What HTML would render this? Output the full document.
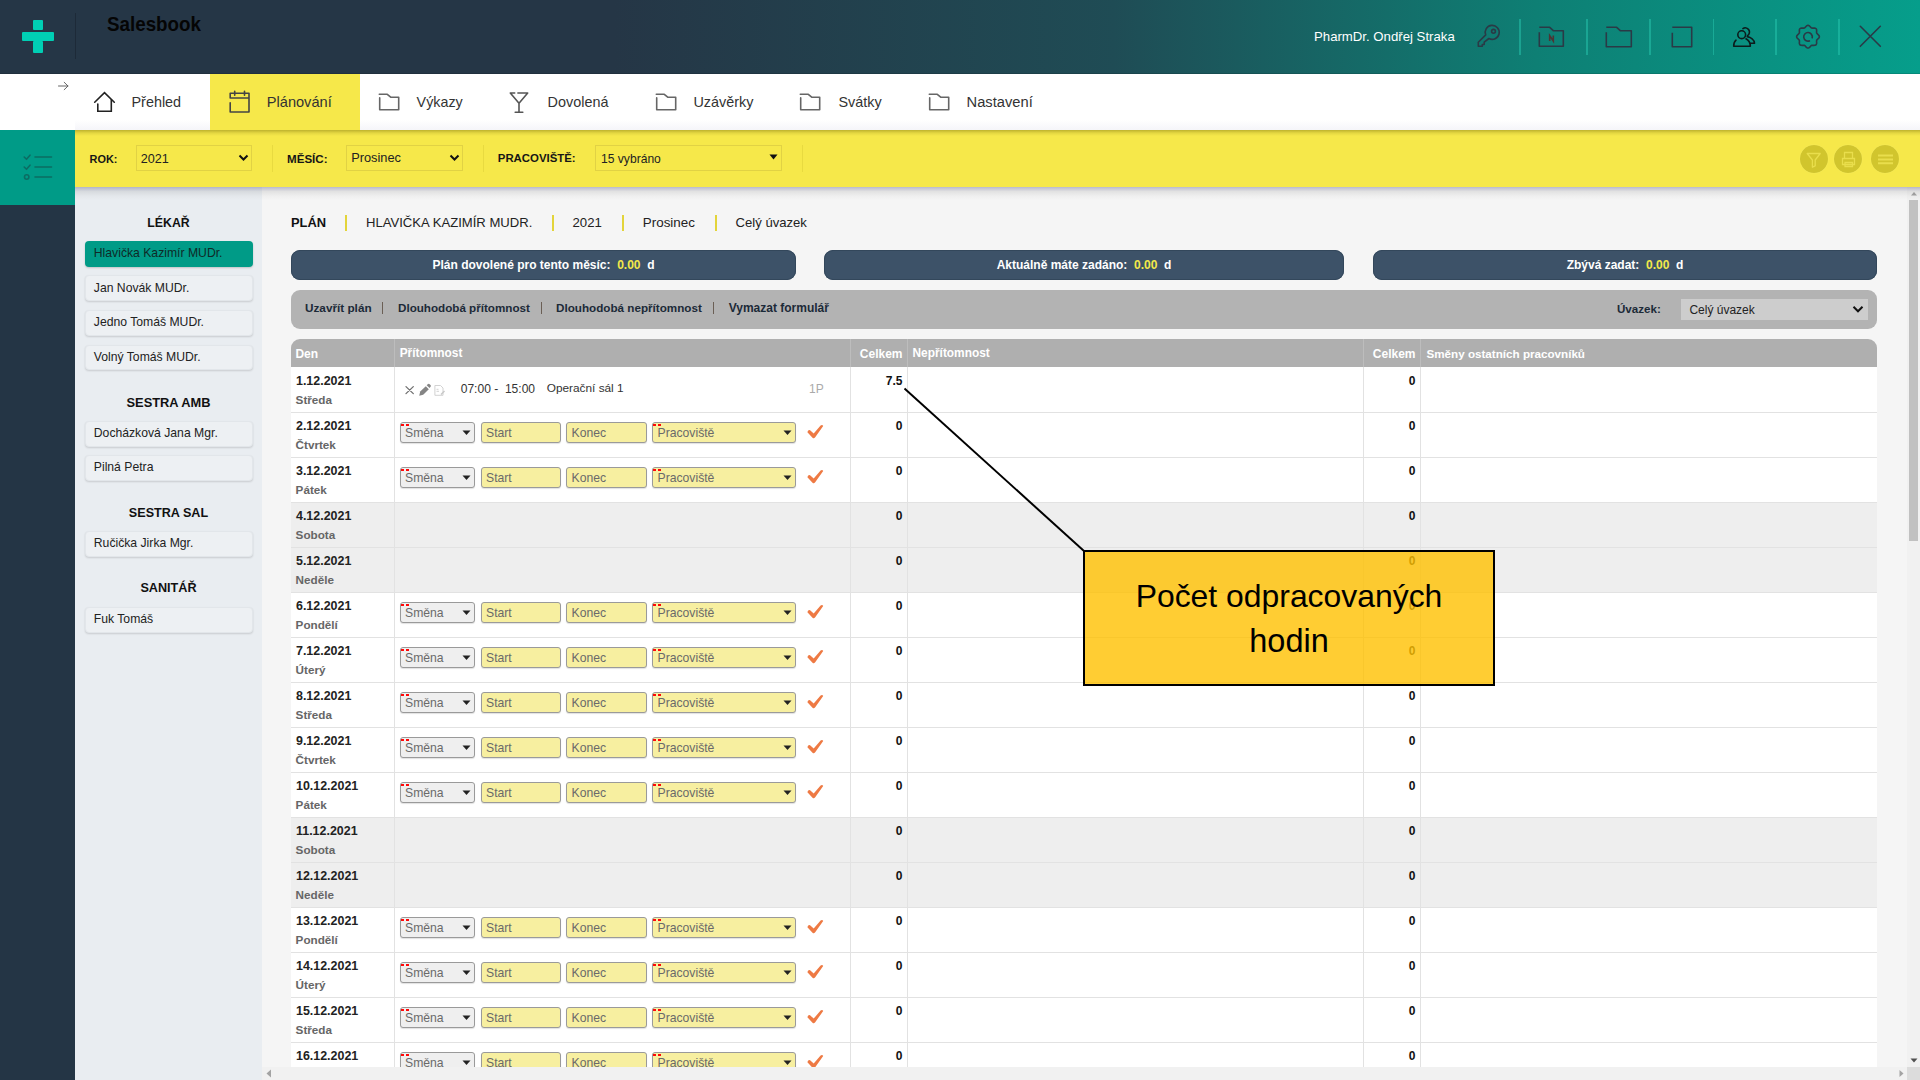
<!DOCTYPE html>
<html><head><meta charset="utf-8"><title>Salesbook</title>
<style>
html,body{margin:0;padding:0;}
body{width:1920px;height:1080px;overflow:hidden;position:relative;background:#f5f5f5;font-family:"Liberation Sans",sans-serif;}
.a{position:absolute;display:block;}
.t{position:absolute;white-space:nowrap;}
</style></head><body>
<div class="a" style="left:0px;top:0px;width:1920px;height:74px;background:linear-gradient(to right,#253646 0%,#253646 32%,#1f4c55 58%,#0e7f74 80%,#069e8b 100%);"></div>
<div class="a" style="left:0px;top:73px;width:1920px;height:1px;background:rgba(0,0,0,0.12);"></div>
<div class="a" style="left:33px;top:20px;width:10px;height:10px;background:#00cfb4;border-radius:1px;"></div>
<div class="a" style="left:22px;top:32px;width:32px;height:9px;background:#00cfb4;border-radius:1px;"></div>
<div class="a" style="left:33px;top:41px;width:10px;height:12px;background:#00cfb4;border-radius:1px;"></div>
<div class="a" style="left:75px;top:13px;width:1px;height:46px;background:#1d2a38;"></div>
<div class="t" style="left:107px;top:13.22px;font-size:21px;line-height:21px;color:#050505;font-weight:bold;transform:scaleX(0.895);transform-origin:0 0;">Salesbook</div>
<div class="t" style="left:1314px;top:29.83px;font-size:13.2px;line-height:13.2px;color:#ffffff;">PharmDr. Ondřej Straka</div>
<div class="a" style="left:1519px;top:19px;width:1.5px;height:36px;background:rgba(40,200,175,0.5);"></div>
<div class="a" style="left:1586.3px;top:19px;width:1.5px;height:36px;background:rgba(40,200,175,0.5);"></div>
<div class="a" style="left:1649.3px;top:19px;width:1.5px;height:36px;background:rgba(40,200,175,0.5);"></div>
<div class="a" style="left:1712.5px;top:19px;width:1.5px;height:36px;background:rgba(40,200,175,0.5);"></div>
<div class="a" style="left:1775.3px;top:19px;width:1.5px;height:36px;background:rgba(40,200,175,0.5);"></div>
<div class="a" style="left:1838px;top:19px;width:1.5px;height:36px;background:rgba(40,200,175,0.5);"></div>
<svg class="a" style="left:1470px;top:18px;" width="40" height="36" viewBox="0 0 40 36"><g fill="none" stroke="#2a3a46" stroke-width="1.6" stroke-linejoin="round"><path d="M15.7 16.9L8.3 24.3V28.3H12.3V26.5H14.2V24.2L18.9 20.5A7 7 0 1 0 15.7 16.9Z"/><circle cx="23.5" cy="13.3" r="1.9"/></g></svg>
<svg class="a" style="left:1530px;top:18px;" width="40" height="36" viewBox="0 0 40 36"><g fill="none" stroke="#2a3a46" stroke-width="1.6" stroke-linejoin="round"><path d="M9.3 9.3H19.7L23.3 12.7H33.3V28.3H9.3V14.3"/></g><path d="M19.7 23V17.6L23.3 23V17.6" fill="none" stroke="#4e3434" stroke-width="1.6"/></svg>
<svg class="a" style="left:1597px;top:18px;" width="40" height="36" viewBox="0 0 40 36"><g fill="none" stroke="#2a3a46" stroke-width="1.6" stroke-linejoin="round"><path d="M9.3 9.3H19.7L23.3 12.7H34.3V28.8H9.3V14.3"/></g></svg>
<svg class="a" style="left:1664px;top:18px;" width="40" height="36" viewBox="0 0 40 36"><g fill="none" stroke="#2a3a46" stroke-width="1.6" stroke-linejoin="round"><path d="M8.3 9.3H27.7V28.7H8.3V14.7"/></g></svg>
<svg class="a" style="left:1724px;top:18px;" width="40" height="36" viewBox="0 0 40 36"><g fill="none" stroke="#0c1c1c" stroke-width="1.6" stroke-linejoin="round" stroke-linecap="round"><circle cx="17.7" cy="16.7" r="3.9"/><path d="M18.9 10.6A4.1 4.1 0 1 1 23.6 17.6"/><path d="M12 22.2C10.3 23.6 9.7 25.7 9.7 28.3H26.3C26.3 25.2 24.6 22.2 22 20.8"/><path d="M23.3 18.6C26.7 19.3 30.3 21.8 30.5 25.3H26.2"/></g></svg>
<svg class="a" style="left:1788px;top:18px;" width="40" height="36" viewBox="0 0 40 36"><g fill="none" stroke="#2a3a46" stroke-width="1.6" stroke-linejoin="round" stroke-linecap="round"><path d="M20.00 7.30 L21.09 7.65 L22.03 8.50 L22.81 9.42 L23.60 10.02 L24.57 10.15 L25.78 10.05 L27.05 10.11 L28.06 10.64 L28.59 11.65 L28.65 12.92 L28.55 14.13 L28.68 15.10 L29.28 15.89 L30.20 16.67 L31.05 17.61 L31.40 18.70 L31.05 19.79 L30.20 20.73 L29.28 21.51 L28.68 22.30 L28.55 23.27 L28.65 24.48 L28.59 25.75 L28.06 26.76 L27.05 27.29 L25.78 27.35 L24.57 27.25 L23.60 27.38 L22.81 27.98 L22.03 28.90 L21.09 29.75 L20.00 30.10 L18.91 29.75 L17.97 28.90 L17.19 27.98 L16.40 27.38 L15.43 27.25 L14.22 27.35 L12.95 27.29 L11.94 26.76 L11.41 25.75 L11.35 24.48 L11.45 23.27 L11.32 22.30 L10.72 21.51 L9.80 20.73 L8.95 19.79 L8.60 18.70 L8.95 17.61 L9.80 16.67 L10.72 15.89 L11.32 15.10 L11.45 14.13 L11.35 12.92 L11.41 11.65 L11.94 10.64 L12.95 10.11 L14.22 10.05 L15.43 10.15 L16.40 10.02 L17.19 9.42 L17.97 8.50 L18.91 7.65 L20.00 7.30Z"/><path d="M24.2 19.8A4.3 4.3 0 1 0 21.4 22.9"/></g></svg>
<svg class="a" style="left:1856px;top:22px;" width="28" height="28" viewBox="0 0 28 28"><g stroke="#2a3a46" stroke-width="1.6" stroke-linecap="round"><path d="M4.3 4.3L24.3 24.3M24.3 4.3L4.3 24.3"/></g></svg>
<div class="a" style="left:0px;top:74px;width:1920px;height:56px;background:#ffffff;"></div>
<div class="a" style="left:75px;top:120px;width:135px;height:10px;background:linear-gradient(to bottom,rgba(60,60,140,0),rgba(60,60,140,0.05));"></div>
<div class="a" style="left:360px;top:120px;width:1560px;height:10px;background:linear-gradient(to bottom,rgba(60,60,140,0),rgba(60,60,140,0.05));"></div>
<div class="a" style="left:210px;top:74px;width:150px;height:56px;background:#f6e84a;"></div>
<svg class="a" style="left:56px;top:80px;" width="14" height="12" viewBox="0 0 14 12"><g fill="none" stroke="#666" stroke-width="1" stroke-linecap="round"><path d="M2.5 6h9.5M8.2 2.3L12 6 8.2 9.7"/></g></svg>
<svg class="a" style="left:85px;top:84px;" width="40" height="36" viewBox="0 0 40 36"><g fill="none" stroke="#222" stroke-width="1.6" stroke-linejoin="miter" stroke-linecap="round"><path d="M9.7 18.2L19.5 8.7 29.3 18.2"/><path d="M12.8 20V27.3H26.3V15.8"/></g></svg>
<div class="t" style="left:131.5px;top:95.11px;font-size:14.4px;line-height:14.4px;color:#333;">Přehled</div>
<svg class="a" style="left:220px;top:84px;" width="40" height="36" viewBox="0 0 40 36"><g fill="none" stroke="#444" stroke-width="1.6" stroke-linejoin="round" stroke-linecap="round"><path d="M10.2 18.7V28H29V9.3H10.2V14H29"/><path d="M14.7 7.2V11.3M24.5 7.2V11.3"/></g></svg>
<div class="t" style="left:266.8px;top:94.94px;font-size:14.6px;line-height:14.6px;color:#333;">Plánování</div>
<svg class="a" style="left:370px;top:84px;" width="40" height="36" viewBox="0 0 40 36"><g fill="none" stroke="#666" stroke-width="1.6" stroke-linejoin="round" stroke-linecap="round"><path d="M9.3 10.3H17.3L20.7 13.2H28.7V25.7H9.7V13.9"/></g></svg>
<div class="t" style="left:416.6px;top:95.20px;font-size:14.3px;line-height:14.3px;color:#333;">Výkazy</div>
<svg class="a" style="left:500px;top:84px;" width="40" height="36" viewBox="0 0 40 36"><g fill="none" stroke="#555" stroke-width="1.6" stroke-linecap="round" stroke-linejoin="round"><path d="M14.7 9H10.3L19 19.2 27.7 9H17.9M19 19.2V28.3M15.2 28.3H22.8"/></g></svg>
<div class="t" style="left:547.6px;top:95.11px;font-size:14.4px;line-height:14.4px;color:#333;">Dovolená</div>
<svg class="a" style="left:647px;top:84px;" width="40" height="36" viewBox="0 0 40 36"><g fill="none" stroke="#666" stroke-width="1.6" stroke-linejoin="round" stroke-linecap="round"><path d="M9.3 10.3H17.3L20.7 13.2H28.7V25.7H9.7V13.9"/></g></svg>
<div class="t" style="left:693.4px;top:95.11px;font-size:14.4px;line-height:14.4px;color:#333;">Uzávěrky</div>
<svg class="a" style="left:791px;top:84px;" width="40" height="36" viewBox="0 0 40 36"><g fill="none" stroke="#666" stroke-width="1.6" stroke-linejoin="round" stroke-linecap="round"><path d="M9.3 10.3H17.3L20.7 13.2H28.7V25.7H9.7V13.9"/></g></svg>
<div class="t" style="left:838.4px;top:95.11px;font-size:14.4px;line-height:14.4px;color:#333;">Svátky</div>
<svg class="a" style="left:920px;top:84px;" width="40" height="36" viewBox="0 0 40 36"><g fill="none" stroke="#666" stroke-width="1.6" stroke-linejoin="round" stroke-linecap="round"><path d="M9.3 10.3H17.3L20.7 13.2H28.7V25.7H9.7V13.9"/></g></svg>
<div class="t" style="left:966.6px;top:94.86px;font-size:14.7px;line-height:14.7px;color:#333;">Nastavení</div>
<div class="a" style="left:0px;top:130px;width:75px;height:950px;background:#243545;"></div>
<div class="a" style="left:0px;top:130px;width:75px;height:75px;background:#009b87;"></div>
<svg class="a" style="left:22px;top:152px;" width="32" height="30" viewBox="0 0 32 30"><g fill="none" stroke="#0b6d63" stroke-width="1.6" stroke-linecap="round" stroke-linejoin="round"><path d="M2.2 5l2.3 2.3L8 3.2M2.2 15l2.3 2.3L8 13.2"/><circle cx="4.7" cy="25" r="2.2"/><path d="M13 5h16.5M13 15h16.5M13 25h16.5"/></g></svg>
<div class="a" style="left:75px;top:130px;width:1845px;height:57px;background:#f6e84a;"></div>
<div class="a" style="left:75px;top:130px;width:1845px;height:6px;background:linear-gradient(to bottom,rgba(100,90,0,0.38),rgba(100,90,0,0.12) 50%,rgba(100,90,0,0));"></div>
<div class="t" style="left:89.6px;top:153.77px;font-size:10.9px;line-height:10.9px;color:#161616;font-weight:bold;">ROK:</div>
<div class="a" style="left:136px;top:145px;width:116px;height:26px;border:1px solid #e1d244;box-sizing:border-box;"></div>
<div class="t" style="left:140.8px;top:152.63px;font-size:12.6px;line-height:12.6px;color:#222;">2021</div>
<svg class="a" style="left:238px;top:154px;" width="11" height="8" viewBox="0 0 11 8"><path d="M1.5 1.5L5.5 5.5 9.5 1.5" fill="none" stroke="#111" stroke-width="2"/></svg>
<div class="a" style="left:272px;top:145px;width:1px;height:27px;background:#e8da40;"></div>
<div class="t" style="left:287px;top:153.18px;font-size:11.6px;line-height:11.6px;color:#161616;font-weight:bold;">MĚSÍC:</div>
<div class="a" style="left:346px;top:145px;width:117px;height:26px;border:1px solid #e1d244;box-sizing:border-box;"></div>
<div class="t" style="left:351.2px;top:152.46px;font-size:12.8px;line-height:12.8px;color:#222;">Prosinec</div>
<svg class="a" style="left:449px;top:154px;" width="11" height="8" viewBox="0 0 11 8"><path d="M1.5 1.5L5.5 5.5 9.5 1.5" fill="none" stroke="#111" stroke-width="2"/></svg>
<div class="a" style="left:483px;top:145px;width:1px;height:27px;background:#e8da40;"></div>
<div class="t" style="left:497.8px;top:153.35px;font-size:11.4px;line-height:11.4px;color:#161616;font-weight:bold;">PRACOVIŠTĚ:</div>
<div class="a" style="left:595px;top:145px;width:187px;height:26px;border:1px solid #e1d244;box-sizing:border-box;"></div>
<div class="t" style="left:601px;top:152.86px;font-size:12.1px;line-height:12.1px;color:#222;">15 vybráno</div>
<svg class="a" style="left:769px;top:154px;" width="10" height="6" viewBox="0 0 10 6"><path d="M0.5 0.5h8l-4 5z" fill="#111"/></svg>
<div class="a" style="left:802px;top:145px;width:1px;height:27px;background:#e8da40;"></div>
<div class="a" style="left:1799.5px;top:145px;width:28px;height:28px;border-radius:50%;background:#d1c52d;box-shadow:0 0 1px rgba(255,255,150,0.6);"></div>
<div class="a" style="left:1834px;top:145px;width:28px;height:28px;border-radius:50%;background:#d1c52d;box-shadow:0 0 1px rgba(255,255,150,0.6);"></div>
<div class="a" style="left:1871px;top:145px;width:28px;height:28px;border-radius:50%;background:#d1c52d;box-shadow:0 0 1px rgba(255,255,150,0.6);"></div>
<svg class="a" style="left:1804px;top:150px;" width="19" height="19" viewBox="0 0 19 19"><path d="M3.2 3.5h13l-5 6.5v5.8l-2.8 1.4V10z" fill="none" stroke="#e9de4c" stroke-width="1.3" stroke-linejoin="round"/></svg>
<svg class="a" style="left:1839px;top:150px;" width="19" height="19" viewBox="0 0 19 19"><g fill="none" stroke="#e9de4c" stroke-width="1.3"><path d="M5.5 8.5V2.5h8v6M3.5 8.5h12v6h-12zM6 12.5h7.5v4H6z"/></g></svg>
<svg class="a" style="left:1876px;top:150px;" width="19" height="19" viewBox="0 0 19 19"><g stroke="#e9de4c" stroke-width="2"><path d="M2 5.5h15M2 9.5h15M2 13.2h15"/></g></svg>
<div class="a" style="left:75px;top:187px;width:187px;height:893px;background:#e9edf1;"></div>
<div class="t" style="left:75px;top:216.89px;font-size:12.3px;line-height:12.3px;color:#111;font-weight:bold;width:187px;text-align:center;">LÉKAŘ</div>
<div class="a" style="left:85px;top:241px;width:168px;height:25.5px;background:#009b87;border-radius:4px;box-shadow:0 1px 2px rgba(0,0,0,0.18);"></div>
<div class="t" style="left:93.8px;top:247.37px;font-size:12.2px;line-height:12.2px;color:#0f2a28;">Hlavička Kazimír MUDr.</div>
<div class="a" style="left:85px;top:275.3px;width:168px;height:25.5px;background:#edf0f3;border-radius:4px;border:1px solid #e2e6ea;box-sizing:border-box;box-shadow:0 1px 2px rgba(0,0,0,0.14);"></div>
<div class="t" style="left:93.8px;top:281.67px;font-size:12.2px;line-height:12.2px;color:#222;">Jan Novák MUDr.</div>
<div class="a" style="left:85px;top:310px;width:168px;height:25.5px;background:#edf0f3;border-radius:4px;border:1px solid #e2e6ea;box-sizing:border-box;box-shadow:0 1px 2px rgba(0,0,0,0.14);"></div>
<div class="t" style="left:93.8px;top:316.37px;font-size:12.2px;line-height:12.2px;color:#222;">Jedno Tomáš MUDr.</div>
<div class="a" style="left:85px;top:344.8px;width:168px;height:25.5px;background:#edf0f3;border-radius:4px;border:1px solid #e2e6ea;box-sizing:border-box;box-shadow:0 1px 2px rgba(0,0,0,0.14);"></div>
<div class="t" style="left:93.8px;top:351.17px;font-size:12.2px;line-height:12.2px;color:#222;">Volný Tomáš MUDr.</div>
<div class="t" style="left:75px;top:396.82px;font-size:12.85px;line-height:12.85px;color:#111;font-weight:bold;width:187px;text-align:center;">SESTRA AMB</div>
<div class="a" style="left:85px;top:421px;width:168px;height:25.5px;background:#edf0f3;border-radius:4px;border:1px solid #e2e6ea;box-sizing:border-box;box-shadow:0 1px 2px rgba(0,0,0,0.14);"></div>
<div class="t" style="left:93.8px;top:427.37px;font-size:12.2px;line-height:12.2px;color:#222;">Docházková Jana Mgr.</div>
<div class="a" style="left:85px;top:455px;width:168px;height:25.5px;background:#edf0f3;border-radius:4px;border:1px solid #e2e6ea;box-sizing:border-box;box-shadow:0 1px 2px rgba(0,0,0,0.14);"></div>
<div class="t" style="left:93.8px;top:461.37px;font-size:12.2px;line-height:12.2px;color:#222;">Pilná Petra</div>
<div class="t" style="left:75px;top:507.13px;font-size:12.6px;line-height:12.6px;color:#111;font-weight:bold;width:187px;text-align:center;">SESTRA SAL</div>
<div class="a" style="left:85px;top:531px;width:168px;height:25.5px;background:#edf0f3;border-radius:4px;border:1px solid #e2e6ea;box-sizing:border-box;box-shadow:0 1px 2px rgba(0,0,0,0.14);"></div>
<div class="t" style="left:93.8px;top:537.37px;font-size:12.2px;line-height:12.2px;color:#222;">Ručička Jirka Mgr.</div>
<div class="t" style="left:75px;top:582.29px;font-size:12.65px;line-height:12.65px;color:#111;font-weight:bold;width:187px;text-align:center;">SANITÁŘ</div>
<div class="a" style="left:85px;top:607px;width:168px;height:25.5px;background:#edf0f3;border-radius:4px;border:1px solid #e2e6ea;box-sizing:border-box;box-shadow:0 1px 2px rgba(0,0,0,0.14);"></div>
<div class="t" style="left:93.8px;top:613.37px;font-size:12.2px;line-height:12.2px;color:#222;">Fuk Tomáš</div>
<div class="t" style="left:291px;top:216.58px;font-size:12.9px;line-height:12.9px;color:#111;font-weight:bold;">PLÁN</div>
<div class="a" style="left:345px;top:215px;width:2px;height:16px;background:#e3d43a;"></div>
<div class="a" style="left:552px;top:215px;width:2px;height:16px;background:#e3d43a;"></div>
<div class="a" style="left:622px;top:215px;width:2px;height:16px;background:#e3d43a;"></div>
<div class="a" style="left:715px;top:215px;width:2px;height:16px;background:#e3d43a;"></div>
<div class="t" style="left:366px;top:216.41px;font-size:13.1px;line-height:13.1px;color:#222;">HLAVIČKA KAZIMÍR MUDR.</div>
<div class="t" style="left:572.5px;top:216.33px;font-size:13.2px;line-height:13.2px;color:#222;">2021</div>
<div class="t" style="left:642.8px;top:216.16px;font-size:13.4px;line-height:13.4px;color:#222;">Prosinec</div>
<div class="t" style="left:735.6px;top:216.41px;font-size:13.1px;line-height:13.1px;color:#222;">Celý úvazek</div>
<div class="a" style="left:291px;top:250px;width:505px;height:30px;background:#3d5268;border-radius:9px;box-shadow:inset 0 0 0 1px #33475b;"></div>
<div class="t" style="left:291px;top:258.84px;width:505px;text-align:center;font-size:12px;line-height:12px;color:#fff;font-weight:bold;white-space:pre">Plán dovolené pro tento měsíc:  <span style="color:#f3e84a">0.00</span>  d</div>
<div class="a" style="left:824px;top:250px;width:520px;height:30px;background:#3d5268;border-radius:9px;box-shadow:inset 0 0 0 1px #33475b;"></div>
<div class="t" style="left:824px;top:258.84px;width:520px;text-align:center;font-size:12px;line-height:12px;color:#fff;font-weight:bold;white-space:pre">Aktuálně máte zadáno:  <span style="color:#f3e84a">0.00</span>  d</div>
<div class="a" style="left:1373px;top:250px;width:504px;height:30px;background:#3d5268;border-radius:9px;box-shadow:inset 0 0 0 1px #33475b;"></div>
<div class="t" style="left:1373px;top:258.84px;width:504px;text-align:center;font-size:12px;line-height:12px;color:#fff;font-weight:bold;white-space:pre">Zbývá zadat:  <span style="color:#f3e84a">0.00</span>  d</div>
<div class="a" style="left:291px;top:290px;width:1586px;height:39px;background:#b3b3b3;border-radius:9px;"></div>
<div class="t" style="left:305px;top:302.35px;font-size:11.75px;line-height:11.75px;color:#1c2a38;font-weight:bold;">Uzavřít plán</div>
<div class="t" style="left:398px;top:302.44px;font-size:11.65px;line-height:11.65px;color:#1c2a38;font-weight:bold;">Dlouhodobá přítomnost</div>
<div class="t" style="left:556px;top:302.41px;font-size:11.68px;line-height:11.68px;color:#1c2a38;font-weight:bold;">Dlouhodobá nepřítomnost</div>
<div class="t" style="left:728.7px;top:302.14px;font-size:12px;line-height:12px;color:#1c2a38;font-weight:bold;">Vymazat formulář</div>
<div class="a" style="left:381.5px;top:302px;width:1px;height:12px;background:#6b5f55;"></div>
<div class="a" style="left:540.5px;top:302px;width:1px;height:12px;background:#6b5f55;"></div>
<div class="a" style="left:712.5px;top:302px;width:1px;height:12px;background:#6b5f55;"></div>
<div class="t" style="left:1617px;top:303.18px;font-size:11.6px;line-height:11.6px;color:#1c2a38;font-weight:bold;">Úvazek:</div>
<div class="a" style="left:1681px;top:299px;width:187px;height:21px;background:#cdcdcd;"></div>
<div class="t" style="left:1689.4px;top:304.34px;font-size:12px;line-height:12px;color:#222;">Celý úvazek</div>
<svg class="a" style="left:1852px;top:305px;" width="12" height="9" viewBox="0 0 12 9"><path d="M1.5 1.8L6 6.3 10.5 1.8" fill="none" stroke="#111" stroke-width="2"/></svg>
<div class="a" style="left:291px;top:339px;width:1586px;height:28px;background:#afafaf;border-radius:9px 9px 0 0;"></div>
<div class="a" style="left:394px;top:339px;width:1px;height:28px;background:#bdbdbd;"></div>
<div class="a" style="left:850px;top:339px;width:1px;height:28px;background:#bdbdbd;"></div>
<div class="a" style="left:907px;top:339px;width:1px;height:28px;background:#bdbdbd;"></div>
<div class="a" style="left:1363px;top:339px;width:1px;height:28px;background:#bdbdbd;"></div>
<div class="a" style="left:1420px;top:339px;width:1px;height:28px;background:#bdbdbd;"></div>
<div class="t" style="left:295.4px;top:347.94px;font-size:12px;line-height:12px;color:#ffffff;font-weight:bold;">Den</div>
<div class="t" style="left:399.7px;top:348.03px;font-size:11.9px;line-height:11.9px;color:#ffffff;font-weight:bold;">Přítomnost</div>
<div class="t" style="left:850px;top:347.94px;font-size:12px;line-height:12px;color:#ffffff;font-weight:bold;width:52.5px;text-align:right;">Celkem</div>
<div class="t" style="left:912.5px;top:348.03px;font-size:11.9px;line-height:11.9px;color:#ffffff;font-weight:bold;">Nepřítomnost</div>
<div class="t" style="left:1363px;top:347.94px;font-size:12px;line-height:12px;color:#ffffff;font-weight:bold;width:52.5px;text-align:right;">Celkem</div>
<div class="t" style="left:1426.5px;top:348.24px;font-size:11.65px;line-height:11.65px;color:#ffffff;font-weight:bold;">Směny ostatních pracovníků</div>
<div class="a" style="left:291px;top:367px;width:1586px;height:45px;background:#ffffff;"></div>
<div class="a" style="left:291px;top:412px;width:1586px;height:45px;background:#ffffff;"></div>
<div class="a" style="left:291px;top:457px;width:1586px;height:45px;background:#ffffff;"></div>
<div class="a" style="left:291px;top:502px;width:1586px;height:45px;background:#eeeeee;"></div>
<div class="a" style="left:291px;top:547px;width:1586px;height:45px;background:#eeeeee;"></div>
<div class="a" style="left:291px;top:592px;width:1586px;height:45px;background:#ffffff;"></div>
<div class="a" style="left:291px;top:637px;width:1586px;height:45px;background:#ffffff;"></div>
<div class="a" style="left:291px;top:682px;width:1586px;height:45px;background:#ffffff;"></div>
<div class="a" style="left:291px;top:727px;width:1586px;height:45px;background:#ffffff;"></div>
<div class="a" style="left:291px;top:772px;width:1586px;height:45px;background:#ffffff;"></div>
<div class="a" style="left:291px;top:817px;width:1586px;height:45px;background:#eeeeee;"></div>
<div class="a" style="left:291px;top:862px;width:1586px;height:45px;background:#eeeeee;"></div>
<div class="a" style="left:291px;top:907px;width:1586px;height:45px;background:#ffffff;"></div>
<div class="a" style="left:291px;top:952px;width:1586px;height:45px;background:#ffffff;"></div>
<div class="a" style="left:291px;top:997px;width:1586px;height:45px;background:#ffffff;"></div>
<div class="a" style="left:291px;top:1042px;width:1586px;height:45px;background:#ffffff;"></div>
<div class="a" style="left:291px;top:412px;width:1586px;height:1px;background:#e2e2e2;"></div>
<div class="a" style="left:291px;top:457px;width:1586px;height:1px;background:#e2e2e2;"></div>
<div class="a" style="left:291px;top:502px;width:1586px;height:1px;background:#e2e2e2;"></div>
<div class="a" style="left:291px;top:547px;width:1586px;height:1px;background:#e2e2e2;"></div>
<div class="a" style="left:291px;top:592px;width:1586px;height:1px;background:#e2e2e2;"></div>
<div class="a" style="left:291px;top:637px;width:1586px;height:1px;background:#e2e2e2;"></div>
<div class="a" style="left:291px;top:682px;width:1586px;height:1px;background:#e2e2e2;"></div>
<div class="a" style="left:291px;top:727px;width:1586px;height:1px;background:#e2e2e2;"></div>
<div class="a" style="left:291px;top:772px;width:1586px;height:1px;background:#e2e2e2;"></div>
<div class="a" style="left:291px;top:817px;width:1586px;height:1px;background:#e2e2e2;"></div>
<div class="a" style="left:291px;top:862px;width:1586px;height:1px;background:#e2e2e2;"></div>
<div class="a" style="left:291px;top:907px;width:1586px;height:1px;background:#e2e2e2;"></div>
<div class="a" style="left:291px;top:952px;width:1586px;height:1px;background:#e2e2e2;"></div>
<div class="a" style="left:291px;top:997px;width:1586px;height:1px;background:#e2e2e2;"></div>
<div class="a" style="left:291px;top:1042px;width:1586px;height:1px;background:#e2e2e2;"></div>
<div class="a" style="left:291px;top:1087px;width:1586px;height:1px;background:#e2e2e2;"></div>
<div class="a" style="left:394px;top:367px;width:1px;height:700px;background:#e2e2e2;"></div>
<div class="a" style="left:850px;top:367px;width:1px;height:700px;background:#e2e2e2;"></div>
<div class="a" style="left:907px;top:367px;width:1px;height:700px;background:#e2e2e2;"></div>
<div class="a" style="left:1363px;top:367px;width:1px;height:700px;background:#e2e2e2;"></div>
<div class="a" style="left:1420px;top:367px;width:1px;height:700px;background:#e2e2e2;"></div>
<div class="t" style="left:296px;top:374.76px;font-size:12.45px;line-height:12.45px;color:#222;font-weight:bold;">1.12.2021</div>
<div class="t" style="left:295.6px;top:394.10px;font-size:11.7px;line-height:11.7px;color:#666;font-weight:bold;">Středa</div>
<div class="t" style="left:850px;top:374.84px;font-size:12px;line-height:12px;color:#111;font-weight:bold;width:52.5px;text-align:right;">7.5</div>
<div class="t" style="left:1363px;top:374.84px;font-size:12px;line-height:12px;color:#111;font-weight:bold;width:52.5px;text-align:right;">0</div>
<svg class="a" style="left:400px;top:378px;" width="50" height="24" viewBox="0 0 50 24"><path d="M6 8.6L13.3 15.6M13.3 8.6L6 15.6" stroke="#707070" stroke-width="1.3" fill="none" stroke-linecap="round"/><path d="M19.2 17.8L20.2 13.6 25.8 8.2 28.8 11.2 23.2 16.7Z" fill="#858585"/><path d="M26.7 7.3L27.7 6.3Q28.8 5.4 29.9 6.4L30.5 7Q31.4 8.1 30.4 9.1L29.5 10Z" fill="#858585"/><g fill="none" stroke="#d2d2d2" stroke-width="1"><path d="M34.9 7.5H40.5L43 10V17.3H34.9Z"/><path d="M36.5 11.3H38.5M36.5 13.3H39"/></g><path d="M41 16.5L44.5 13" stroke="#c8c8c8" stroke-width="1.4"/></svg>
<div class="t" style="left:460.7px;top:382.80px;font-size:12.05px;line-height:12.05px;color:#333;">07:00 -&nbsp; 15:00</div>
<div class="t" style="left:546.7px;top:382.98px;font-size:11.84px;line-height:11.84px;color:#333;">Operační sál 1</div>
<div class="t" style="left:809px;top:382.94px;font-size:12px;line-height:12px;color:#aaa;">1P</div>
<div class="t" style="left:296px;top:419.76px;font-size:12.45px;line-height:12.45px;color:#222;font-weight:bold;">2.12.2021</div>
<div class="t" style="left:295.6px;top:439.10px;font-size:11.7px;line-height:11.7px;color:#666;font-weight:bold;">Čtvrtek</div>
<div class="t" style="left:850px;top:419.84px;font-size:12px;line-height:12px;color:#111;font-weight:bold;width:52.5px;text-align:right;">0</div>
<div class="t" style="left:1363px;top:419.84px;font-size:12px;line-height:12px;color:#111;font-weight:bold;width:52.5px;text-align:right;">0</div>
<div class="a" style="left:400px;top:422px;width:75px;height:21px;background:#efefef;border:1px solid #9a9a9a;border-radius:3px;box-sizing:border-box;box-shadow:0 1px 1px rgba(0,0,0,0.12);"></div>
<div class="a" style="left:401px;top:424px;width:3px;height:2px;background:#ff0808;"></div>
<div class="a" style="left:406px;top:424px;width:3px;height:2px;background:#ff0808;"></div>
<div class="t" style="left:405px;top:426.67px;font-size:12.2px;line-height:12.2px;color:#6a6a6a;">Směna</div>
<svg class="a" style="left:462px;top:430px;" width="9" height="6" viewBox="0 0 9 6"><path d="M0.5 0.5h8l-4 4.5z" fill="#222"/></svg>
<div class="a" style="left:481px;top:422px;width:80px;height:21px;background:#f7efa0;border:1px solid #9a9a9a;border-radius:3px;box-sizing:border-box;box-shadow:0 1px 1px rgba(0,0,0,0.12);"></div>
<div class="t" style="left:486px;top:426.67px;font-size:12.2px;line-height:12.2px;color:#6a6a6a;">Start</div>
<div class="a" style="left:566px;top:422px;width:81px;height:21px;background:#f7efa0;border:1px solid #9a9a9a;border-radius:3px;box-sizing:border-box;box-shadow:0 1px 1px rgba(0,0,0,0.12);"></div>
<div class="t" style="left:571.5px;top:426.67px;font-size:12.2px;line-height:12.2px;color:#6a6a6a;">Konec</div>
<div class="a" style="left:652px;top:422px;width:144px;height:21px;background:#f7efa0;border:1px solid #9a9a9a;border-radius:3px;box-sizing:border-box;box-shadow:0 1px 1px rgba(0,0,0,0.12);"></div>
<div class="a" style="left:653px;top:424px;width:3px;height:2px;background:#ff0808;"></div>
<div class="a" style="left:658px;top:424px;width:3px;height:2px;background:#ff0808;"></div>
<div class="t" style="left:657.5px;top:426.67px;font-size:12.2px;line-height:12.2px;color:#6a6a6a;">Pracoviště</div>
<svg class="a" style="left:783px;top:430px;" width="9" height="6" viewBox="0 0 9 6"><path d="M0.5 0.5h8l-4 4.5z" fill="#222"/></svg>
<svg class="a" style="left:800px;top:418px;" width="30" height="28" viewBox="0 0 30 28"><path d="M7.4 14.2Q7.6 12 9.8 12L13.7 15.6L20.6 7.4Q22.4 6.4 23.2 7.9L15 19.6Q13.7 21 12.5 19.7Z" fill="#ee7a44"/></svg>
<div class="t" style="left:296px;top:464.76px;font-size:12.45px;line-height:12.45px;color:#222;font-weight:bold;">3.12.2021</div>
<div class="t" style="left:295.6px;top:484.10px;font-size:11.7px;line-height:11.7px;color:#666;font-weight:bold;">Pátek</div>
<div class="t" style="left:850px;top:464.84px;font-size:12px;line-height:12px;color:#111;font-weight:bold;width:52.5px;text-align:right;">0</div>
<div class="t" style="left:1363px;top:464.84px;font-size:12px;line-height:12px;color:#111;font-weight:bold;width:52.5px;text-align:right;">0</div>
<div class="a" style="left:400px;top:467px;width:75px;height:21px;background:#efefef;border:1px solid #9a9a9a;border-radius:3px;box-sizing:border-box;box-shadow:0 1px 1px rgba(0,0,0,0.12);"></div>
<div class="a" style="left:401px;top:469px;width:3px;height:2px;background:#ff0808;"></div>
<div class="a" style="left:406px;top:469px;width:3px;height:2px;background:#ff0808;"></div>
<div class="t" style="left:405px;top:471.67px;font-size:12.2px;line-height:12.2px;color:#6a6a6a;">Směna</div>
<svg class="a" style="left:462px;top:475px;" width="9" height="6" viewBox="0 0 9 6"><path d="M0.5 0.5h8l-4 4.5z" fill="#222"/></svg>
<div class="a" style="left:481px;top:467px;width:80px;height:21px;background:#f7efa0;border:1px solid #9a9a9a;border-radius:3px;box-sizing:border-box;box-shadow:0 1px 1px rgba(0,0,0,0.12);"></div>
<div class="t" style="left:486px;top:471.67px;font-size:12.2px;line-height:12.2px;color:#6a6a6a;">Start</div>
<div class="a" style="left:566px;top:467px;width:81px;height:21px;background:#f7efa0;border:1px solid #9a9a9a;border-radius:3px;box-sizing:border-box;box-shadow:0 1px 1px rgba(0,0,0,0.12);"></div>
<div class="t" style="left:571.5px;top:471.67px;font-size:12.2px;line-height:12.2px;color:#6a6a6a;">Konec</div>
<div class="a" style="left:652px;top:467px;width:144px;height:21px;background:#f7efa0;border:1px solid #9a9a9a;border-radius:3px;box-sizing:border-box;box-shadow:0 1px 1px rgba(0,0,0,0.12);"></div>
<div class="a" style="left:653px;top:469px;width:3px;height:2px;background:#ff0808;"></div>
<div class="a" style="left:658px;top:469px;width:3px;height:2px;background:#ff0808;"></div>
<div class="t" style="left:657.5px;top:471.67px;font-size:12.2px;line-height:12.2px;color:#6a6a6a;">Pracoviště</div>
<svg class="a" style="left:783px;top:475px;" width="9" height="6" viewBox="0 0 9 6"><path d="M0.5 0.5h8l-4 4.5z" fill="#222"/></svg>
<svg class="a" style="left:800px;top:463px;" width="30" height="28" viewBox="0 0 30 28"><path d="M7.4 14.2Q7.6 12 9.8 12L13.7 15.6L20.6 7.4Q22.4 6.4 23.2 7.9L15 19.6Q13.7 21 12.5 19.7Z" fill="#ee7a44"/></svg>
<div class="t" style="left:296px;top:509.76px;font-size:12.45px;line-height:12.45px;color:#222;font-weight:bold;">4.12.2021</div>
<div class="t" style="left:295.6px;top:529.10px;font-size:11.7px;line-height:11.7px;color:#666;font-weight:bold;">Sobota</div>
<div class="t" style="left:850px;top:509.84px;font-size:12px;line-height:12px;color:#111;font-weight:bold;width:52.5px;text-align:right;">0</div>
<div class="t" style="left:1363px;top:509.84px;font-size:12px;line-height:12px;color:#111;font-weight:bold;width:52.5px;text-align:right;">0</div>
<div class="t" style="left:296px;top:554.76px;font-size:12.45px;line-height:12.45px;color:#222;font-weight:bold;">5.12.2021</div>
<div class="t" style="left:295.6px;top:574.10px;font-size:11.7px;line-height:11.7px;color:#666;font-weight:bold;">Neděle</div>
<div class="t" style="left:850px;top:554.84px;font-size:12px;line-height:12px;color:#111;font-weight:bold;width:52.5px;text-align:right;">0</div>
<div class="t" style="left:1363px;top:554.84px;font-size:12px;line-height:12px;color:#111;font-weight:bold;width:52.5px;text-align:right;">0</div>
<div class="t" style="left:296px;top:599.76px;font-size:12.45px;line-height:12.45px;color:#222;font-weight:bold;">6.12.2021</div>
<div class="t" style="left:295.6px;top:619.10px;font-size:11.7px;line-height:11.7px;color:#666;font-weight:bold;">Pondělí</div>
<div class="t" style="left:850px;top:599.84px;font-size:12px;line-height:12px;color:#111;font-weight:bold;width:52.5px;text-align:right;">0</div>
<div class="t" style="left:1363px;top:599.84px;font-size:12px;line-height:12px;color:#111;font-weight:bold;width:52.5px;text-align:right;">0</div>
<div class="a" style="left:400px;top:602px;width:75px;height:21px;background:#efefef;border:1px solid #9a9a9a;border-radius:3px;box-sizing:border-box;box-shadow:0 1px 1px rgba(0,0,0,0.12);"></div>
<div class="a" style="left:401px;top:604px;width:3px;height:2px;background:#ff0808;"></div>
<div class="a" style="left:406px;top:604px;width:3px;height:2px;background:#ff0808;"></div>
<div class="t" style="left:405px;top:606.67px;font-size:12.2px;line-height:12.2px;color:#6a6a6a;">Směna</div>
<svg class="a" style="left:462px;top:610px;" width="9" height="6" viewBox="0 0 9 6"><path d="M0.5 0.5h8l-4 4.5z" fill="#222"/></svg>
<div class="a" style="left:481px;top:602px;width:80px;height:21px;background:#f7efa0;border:1px solid #9a9a9a;border-radius:3px;box-sizing:border-box;box-shadow:0 1px 1px rgba(0,0,0,0.12);"></div>
<div class="t" style="left:486px;top:606.67px;font-size:12.2px;line-height:12.2px;color:#6a6a6a;">Start</div>
<div class="a" style="left:566px;top:602px;width:81px;height:21px;background:#f7efa0;border:1px solid #9a9a9a;border-radius:3px;box-sizing:border-box;box-shadow:0 1px 1px rgba(0,0,0,0.12);"></div>
<div class="t" style="left:571.5px;top:606.67px;font-size:12.2px;line-height:12.2px;color:#6a6a6a;">Konec</div>
<div class="a" style="left:652px;top:602px;width:144px;height:21px;background:#f7efa0;border:1px solid #9a9a9a;border-radius:3px;box-sizing:border-box;box-shadow:0 1px 1px rgba(0,0,0,0.12);"></div>
<div class="a" style="left:653px;top:604px;width:3px;height:2px;background:#ff0808;"></div>
<div class="a" style="left:658px;top:604px;width:3px;height:2px;background:#ff0808;"></div>
<div class="t" style="left:657.5px;top:606.67px;font-size:12.2px;line-height:12.2px;color:#6a6a6a;">Pracoviště</div>
<svg class="a" style="left:783px;top:610px;" width="9" height="6" viewBox="0 0 9 6"><path d="M0.5 0.5h8l-4 4.5z" fill="#222"/></svg>
<svg class="a" style="left:800px;top:598px;" width="30" height="28" viewBox="0 0 30 28"><path d="M7.4 14.2Q7.6 12 9.8 12L13.7 15.6L20.6 7.4Q22.4 6.4 23.2 7.9L15 19.6Q13.7 21 12.5 19.7Z" fill="#ee7a44"/></svg>
<div class="t" style="left:296px;top:644.76px;font-size:12.45px;line-height:12.45px;color:#222;font-weight:bold;">7.12.2021</div>
<div class="t" style="left:295.6px;top:664.10px;font-size:11.7px;line-height:11.7px;color:#666;font-weight:bold;">Úterý</div>
<div class="t" style="left:850px;top:644.84px;font-size:12px;line-height:12px;color:#111;font-weight:bold;width:52.5px;text-align:right;">0</div>
<div class="t" style="left:1363px;top:644.84px;font-size:12px;line-height:12px;color:#111;font-weight:bold;width:52.5px;text-align:right;">0</div>
<div class="a" style="left:400px;top:647px;width:75px;height:21px;background:#efefef;border:1px solid #9a9a9a;border-radius:3px;box-sizing:border-box;box-shadow:0 1px 1px rgba(0,0,0,0.12);"></div>
<div class="a" style="left:401px;top:649px;width:3px;height:2px;background:#ff0808;"></div>
<div class="a" style="left:406px;top:649px;width:3px;height:2px;background:#ff0808;"></div>
<div class="t" style="left:405px;top:651.67px;font-size:12.2px;line-height:12.2px;color:#6a6a6a;">Směna</div>
<svg class="a" style="left:462px;top:655px;" width="9" height="6" viewBox="0 0 9 6"><path d="M0.5 0.5h8l-4 4.5z" fill="#222"/></svg>
<div class="a" style="left:481px;top:647px;width:80px;height:21px;background:#f7efa0;border:1px solid #9a9a9a;border-radius:3px;box-sizing:border-box;box-shadow:0 1px 1px rgba(0,0,0,0.12);"></div>
<div class="t" style="left:486px;top:651.67px;font-size:12.2px;line-height:12.2px;color:#6a6a6a;">Start</div>
<div class="a" style="left:566px;top:647px;width:81px;height:21px;background:#f7efa0;border:1px solid #9a9a9a;border-radius:3px;box-sizing:border-box;box-shadow:0 1px 1px rgba(0,0,0,0.12);"></div>
<div class="t" style="left:571.5px;top:651.67px;font-size:12.2px;line-height:12.2px;color:#6a6a6a;">Konec</div>
<div class="a" style="left:652px;top:647px;width:144px;height:21px;background:#f7efa0;border:1px solid #9a9a9a;border-radius:3px;box-sizing:border-box;box-shadow:0 1px 1px rgba(0,0,0,0.12);"></div>
<div class="a" style="left:653px;top:649px;width:3px;height:2px;background:#ff0808;"></div>
<div class="a" style="left:658px;top:649px;width:3px;height:2px;background:#ff0808;"></div>
<div class="t" style="left:657.5px;top:651.67px;font-size:12.2px;line-height:12.2px;color:#6a6a6a;">Pracoviště</div>
<svg class="a" style="left:783px;top:655px;" width="9" height="6" viewBox="0 0 9 6"><path d="M0.5 0.5h8l-4 4.5z" fill="#222"/></svg>
<svg class="a" style="left:800px;top:643px;" width="30" height="28" viewBox="0 0 30 28"><path d="M7.4 14.2Q7.6 12 9.8 12L13.7 15.6L20.6 7.4Q22.4 6.4 23.2 7.9L15 19.6Q13.7 21 12.5 19.7Z" fill="#ee7a44"/></svg>
<div class="t" style="left:296px;top:689.76px;font-size:12.45px;line-height:12.45px;color:#222;font-weight:bold;">8.12.2021</div>
<div class="t" style="left:295.6px;top:709.10px;font-size:11.7px;line-height:11.7px;color:#666;font-weight:bold;">Středa</div>
<div class="t" style="left:850px;top:689.84px;font-size:12px;line-height:12px;color:#111;font-weight:bold;width:52.5px;text-align:right;">0</div>
<div class="t" style="left:1363px;top:689.84px;font-size:12px;line-height:12px;color:#111;font-weight:bold;width:52.5px;text-align:right;">0</div>
<div class="a" style="left:400px;top:692px;width:75px;height:21px;background:#efefef;border:1px solid #9a9a9a;border-radius:3px;box-sizing:border-box;box-shadow:0 1px 1px rgba(0,0,0,0.12);"></div>
<div class="a" style="left:401px;top:694px;width:3px;height:2px;background:#ff0808;"></div>
<div class="a" style="left:406px;top:694px;width:3px;height:2px;background:#ff0808;"></div>
<div class="t" style="left:405px;top:696.67px;font-size:12.2px;line-height:12.2px;color:#6a6a6a;">Směna</div>
<svg class="a" style="left:462px;top:700px;" width="9" height="6" viewBox="0 0 9 6"><path d="M0.5 0.5h8l-4 4.5z" fill="#222"/></svg>
<div class="a" style="left:481px;top:692px;width:80px;height:21px;background:#f7efa0;border:1px solid #9a9a9a;border-radius:3px;box-sizing:border-box;box-shadow:0 1px 1px rgba(0,0,0,0.12);"></div>
<div class="t" style="left:486px;top:696.67px;font-size:12.2px;line-height:12.2px;color:#6a6a6a;">Start</div>
<div class="a" style="left:566px;top:692px;width:81px;height:21px;background:#f7efa0;border:1px solid #9a9a9a;border-radius:3px;box-sizing:border-box;box-shadow:0 1px 1px rgba(0,0,0,0.12);"></div>
<div class="t" style="left:571.5px;top:696.67px;font-size:12.2px;line-height:12.2px;color:#6a6a6a;">Konec</div>
<div class="a" style="left:652px;top:692px;width:144px;height:21px;background:#f7efa0;border:1px solid #9a9a9a;border-radius:3px;box-sizing:border-box;box-shadow:0 1px 1px rgba(0,0,0,0.12);"></div>
<div class="a" style="left:653px;top:694px;width:3px;height:2px;background:#ff0808;"></div>
<div class="a" style="left:658px;top:694px;width:3px;height:2px;background:#ff0808;"></div>
<div class="t" style="left:657.5px;top:696.67px;font-size:12.2px;line-height:12.2px;color:#6a6a6a;">Pracoviště</div>
<svg class="a" style="left:783px;top:700px;" width="9" height="6" viewBox="0 0 9 6"><path d="M0.5 0.5h8l-4 4.5z" fill="#222"/></svg>
<svg class="a" style="left:800px;top:688px;" width="30" height="28" viewBox="0 0 30 28"><path d="M7.4 14.2Q7.6 12 9.8 12L13.7 15.6L20.6 7.4Q22.4 6.4 23.2 7.9L15 19.6Q13.7 21 12.5 19.7Z" fill="#ee7a44"/></svg>
<div class="t" style="left:296px;top:734.76px;font-size:12.45px;line-height:12.45px;color:#222;font-weight:bold;">9.12.2021</div>
<div class="t" style="left:295.6px;top:754.10px;font-size:11.7px;line-height:11.7px;color:#666;font-weight:bold;">Čtvrtek</div>
<div class="t" style="left:850px;top:734.84px;font-size:12px;line-height:12px;color:#111;font-weight:bold;width:52.5px;text-align:right;">0</div>
<div class="t" style="left:1363px;top:734.84px;font-size:12px;line-height:12px;color:#111;font-weight:bold;width:52.5px;text-align:right;">0</div>
<div class="a" style="left:400px;top:737px;width:75px;height:21px;background:#efefef;border:1px solid #9a9a9a;border-radius:3px;box-sizing:border-box;box-shadow:0 1px 1px rgba(0,0,0,0.12);"></div>
<div class="a" style="left:401px;top:739px;width:3px;height:2px;background:#ff0808;"></div>
<div class="a" style="left:406px;top:739px;width:3px;height:2px;background:#ff0808;"></div>
<div class="t" style="left:405px;top:741.67px;font-size:12.2px;line-height:12.2px;color:#6a6a6a;">Směna</div>
<svg class="a" style="left:462px;top:745px;" width="9" height="6" viewBox="0 0 9 6"><path d="M0.5 0.5h8l-4 4.5z" fill="#222"/></svg>
<div class="a" style="left:481px;top:737px;width:80px;height:21px;background:#f7efa0;border:1px solid #9a9a9a;border-radius:3px;box-sizing:border-box;box-shadow:0 1px 1px rgba(0,0,0,0.12);"></div>
<div class="t" style="left:486px;top:741.67px;font-size:12.2px;line-height:12.2px;color:#6a6a6a;">Start</div>
<div class="a" style="left:566px;top:737px;width:81px;height:21px;background:#f7efa0;border:1px solid #9a9a9a;border-radius:3px;box-sizing:border-box;box-shadow:0 1px 1px rgba(0,0,0,0.12);"></div>
<div class="t" style="left:571.5px;top:741.67px;font-size:12.2px;line-height:12.2px;color:#6a6a6a;">Konec</div>
<div class="a" style="left:652px;top:737px;width:144px;height:21px;background:#f7efa0;border:1px solid #9a9a9a;border-radius:3px;box-sizing:border-box;box-shadow:0 1px 1px rgba(0,0,0,0.12);"></div>
<div class="a" style="left:653px;top:739px;width:3px;height:2px;background:#ff0808;"></div>
<div class="a" style="left:658px;top:739px;width:3px;height:2px;background:#ff0808;"></div>
<div class="t" style="left:657.5px;top:741.67px;font-size:12.2px;line-height:12.2px;color:#6a6a6a;">Pracoviště</div>
<svg class="a" style="left:783px;top:745px;" width="9" height="6" viewBox="0 0 9 6"><path d="M0.5 0.5h8l-4 4.5z" fill="#222"/></svg>
<svg class="a" style="left:800px;top:733px;" width="30" height="28" viewBox="0 0 30 28"><path d="M7.4 14.2Q7.6 12 9.8 12L13.7 15.6L20.6 7.4Q22.4 6.4 23.2 7.9L15 19.6Q13.7 21 12.5 19.7Z" fill="#ee7a44"/></svg>
<div class="t" style="left:296px;top:779.76px;font-size:12.45px;line-height:12.45px;color:#222;font-weight:bold;">10.12.2021</div>
<div class="t" style="left:295.6px;top:799.10px;font-size:11.7px;line-height:11.7px;color:#666;font-weight:bold;">Pátek</div>
<div class="t" style="left:850px;top:779.84px;font-size:12px;line-height:12px;color:#111;font-weight:bold;width:52.5px;text-align:right;">0</div>
<div class="t" style="left:1363px;top:779.84px;font-size:12px;line-height:12px;color:#111;font-weight:bold;width:52.5px;text-align:right;">0</div>
<div class="a" style="left:400px;top:782px;width:75px;height:21px;background:#efefef;border:1px solid #9a9a9a;border-radius:3px;box-sizing:border-box;box-shadow:0 1px 1px rgba(0,0,0,0.12);"></div>
<div class="a" style="left:401px;top:784px;width:3px;height:2px;background:#ff0808;"></div>
<div class="a" style="left:406px;top:784px;width:3px;height:2px;background:#ff0808;"></div>
<div class="t" style="left:405px;top:786.67px;font-size:12.2px;line-height:12.2px;color:#6a6a6a;">Směna</div>
<svg class="a" style="left:462px;top:790px;" width="9" height="6" viewBox="0 0 9 6"><path d="M0.5 0.5h8l-4 4.5z" fill="#222"/></svg>
<div class="a" style="left:481px;top:782px;width:80px;height:21px;background:#f7efa0;border:1px solid #9a9a9a;border-radius:3px;box-sizing:border-box;box-shadow:0 1px 1px rgba(0,0,0,0.12);"></div>
<div class="t" style="left:486px;top:786.67px;font-size:12.2px;line-height:12.2px;color:#6a6a6a;">Start</div>
<div class="a" style="left:566px;top:782px;width:81px;height:21px;background:#f7efa0;border:1px solid #9a9a9a;border-radius:3px;box-sizing:border-box;box-shadow:0 1px 1px rgba(0,0,0,0.12);"></div>
<div class="t" style="left:571.5px;top:786.67px;font-size:12.2px;line-height:12.2px;color:#6a6a6a;">Konec</div>
<div class="a" style="left:652px;top:782px;width:144px;height:21px;background:#f7efa0;border:1px solid #9a9a9a;border-radius:3px;box-sizing:border-box;box-shadow:0 1px 1px rgba(0,0,0,0.12);"></div>
<div class="a" style="left:653px;top:784px;width:3px;height:2px;background:#ff0808;"></div>
<div class="a" style="left:658px;top:784px;width:3px;height:2px;background:#ff0808;"></div>
<div class="t" style="left:657.5px;top:786.67px;font-size:12.2px;line-height:12.2px;color:#6a6a6a;">Pracoviště</div>
<svg class="a" style="left:783px;top:790px;" width="9" height="6" viewBox="0 0 9 6"><path d="M0.5 0.5h8l-4 4.5z" fill="#222"/></svg>
<svg class="a" style="left:800px;top:778px;" width="30" height="28" viewBox="0 0 30 28"><path d="M7.4 14.2Q7.6 12 9.8 12L13.7 15.6L20.6 7.4Q22.4 6.4 23.2 7.9L15 19.6Q13.7 21 12.5 19.7Z" fill="#ee7a44"/></svg>
<div class="t" style="left:296px;top:824.76px;font-size:12.45px;line-height:12.45px;color:#222;font-weight:bold;">11.12.2021</div>
<div class="t" style="left:295.6px;top:844.10px;font-size:11.7px;line-height:11.7px;color:#666;font-weight:bold;">Sobota</div>
<div class="t" style="left:850px;top:824.84px;font-size:12px;line-height:12px;color:#111;font-weight:bold;width:52.5px;text-align:right;">0</div>
<div class="t" style="left:1363px;top:824.84px;font-size:12px;line-height:12px;color:#111;font-weight:bold;width:52.5px;text-align:right;">0</div>
<div class="t" style="left:296px;top:869.76px;font-size:12.45px;line-height:12.45px;color:#222;font-weight:bold;">12.12.2021</div>
<div class="t" style="left:295.6px;top:889.10px;font-size:11.7px;line-height:11.7px;color:#666;font-weight:bold;">Neděle</div>
<div class="t" style="left:850px;top:869.84px;font-size:12px;line-height:12px;color:#111;font-weight:bold;width:52.5px;text-align:right;">0</div>
<div class="t" style="left:1363px;top:869.84px;font-size:12px;line-height:12px;color:#111;font-weight:bold;width:52.5px;text-align:right;">0</div>
<div class="t" style="left:296px;top:914.76px;font-size:12.45px;line-height:12.45px;color:#222;font-weight:bold;">13.12.2021</div>
<div class="t" style="left:295.6px;top:934.10px;font-size:11.7px;line-height:11.7px;color:#666;font-weight:bold;">Pondělí</div>
<div class="t" style="left:850px;top:914.84px;font-size:12px;line-height:12px;color:#111;font-weight:bold;width:52.5px;text-align:right;">0</div>
<div class="t" style="left:1363px;top:914.84px;font-size:12px;line-height:12px;color:#111;font-weight:bold;width:52.5px;text-align:right;">0</div>
<div class="a" style="left:400px;top:917px;width:75px;height:21px;background:#efefef;border:1px solid #9a9a9a;border-radius:3px;box-sizing:border-box;box-shadow:0 1px 1px rgba(0,0,0,0.12);"></div>
<div class="a" style="left:401px;top:919px;width:3px;height:2px;background:#ff0808;"></div>
<div class="a" style="left:406px;top:919px;width:3px;height:2px;background:#ff0808;"></div>
<div class="t" style="left:405px;top:921.67px;font-size:12.2px;line-height:12.2px;color:#6a6a6a;">Směna</div>
<svg class="a" style="left:462px;top:925px;" width="9" height="6" viewBox="0 0 9 6"><path d="M0.5 0.5h8l-4 4.5z" fill="#222"/></svg>
<div class="a" style="left:481px;top:917px;width:80px;height:21px;background:#f7efa0;border:1px solid #9a9a9a;border-radius:3px;box-sizing:border-box;box-shadow:0 1px 1px rgba(0,0,0,0.12);"></div>
<div class="t" style="left:486px;top:921.67px;font-size:12.2px;line-height:12.2px;color:#6a6a6a;">Start</div>
<div class="a" style="left:566px;top:917px;width:81px;height:21px;background:#f7efa0;border:1px solid #9a9a9a;border-radius:3px;box-sizing:border-box;box-shadow:0 1px 1px rgba(0,0,0,0.12);"></div>
<div class="t" style="left:571.5px;top:921.67px;font-size:12.2px;line-height:12.2px;color:#6a6a6a;">Konec</div>
<div class="a" style="left:652px;top:917px;width:144px;height:21px;background:#f7efa0;border:1px solid #9a9a9a;border-radius:3px;box-sizing:border-box;box-shadow:0 1px 1px rgba(0,0,0,0.12);"></div>
<div class="a" style="left:653px;top:919px;width:3px;height:2px;background:#ff0808;"></div>
<div class="a" style="left:658px;top:919px;width:3px;height:2px;background:#ff0808;"></div>
<div class="t" style="left:657.5px;top:921.67px;font-size:12.2px;line-height:12.2px;color:#6a6a6a;">Pracoviště</div>
<svg class="a" style="left:783px;top:925px;" width="9" height="6" viewBox="0 0 9 6"><path d="M0.5 0.5h8l-4 4.5z" fill="#222"/></svg>
<svg class="a" style="left:800px;top:913px;" width="30" height="28" viewBox="0 0 30 28"><path d="M7.4 14.2Q7.6 12 9.8 12L13.7 15.6L20.6 7.4Q22.4 6.4 23.2 7.9L15 19.6Q13.7 21 12.5 19.7Z" fill="#ee7a44"/></svg>
<div class="t" style="left:296px;top:959.76px;font-size:12.45px;line-height:12.45px;color:#222;font-weight:bold;">14.12.2021</div>
<div class="t" style="left:295.6px;top:979.10px;font-size:11.7px;line-height:11.7px;color:#666;font-weight:bold;">Úterý</div>
<div class="t" style="left:850px;top:959.84px;font-size:12px;line-height:12px;color:#111;font-weight:bold;width:52.5px;text-align:right;">0</div>
<div class="t" style="left:1363px;top:959.84px;font-size:12px;line-height:12px;color:#111;font-weight:bold;width:52.5px;text-align:right;">0</div>
<div class="a" style="left:400px;top:962px;width:75px;height:21px;background:#efefef;border:1px solid #9a9a9a;border-radius:3px;box-sizing:border-box;box-shadow:0 1px 1px rgba(0,0,0,0.12);"></div>
<div class="a" style="left:401px;top:964px;width:3px;height:2px;background:#ff0808;"></div>
<div class="a" style="left:406px;top:964px;width:3px;height:2px;background:#ff0808;"></div>
<div class="t" style="left:405px;top:966.67px;font-size:12.2px;line-height:12.2px;color:#6a6a6a;">Směna</div>
<svg class="a" style="left:462px;top:970px;" width="9" height="6" viewBox="0 0 9 6"><path d="M0.5 0.5h8l-4 4.5z" fill="#222"/></svg>
<div class="a" style="left:481px;top:962px;width:80px;height:21px;background:#f7efa0;border:1px solid #9a9a9a;border-radius:3px;box-sizing:border-box;box-shadow:0 1px 1px rgba(0,0,0,0.12);"></div>
<div class="t" style="left:486px;top:966.67px;font-size:12.2px;line-height:12.2px;color:#6a6a6a;">Start</div>
<div class="a" style="left:566px;top:962px;width:81px;height:21px;background:#f7efa0;border:1px solid #9a9a9a;border-radius:3px;box-sizing:border-box;box-shadow:0 1px 1px rgba(0,0,0,0.12);"></div>
<div class="t" style="left:571.5px;top:966.67px;font-size:12.2px;line-height:12.2px;color:#6a6a6a;">Konec</div>
<div class="a" style="left:652px;top:962px;width:144px;height:21px;background:#f7efa0;border:1px solid #9a9a9a;border-radius:3px;box-sizing:border-box;box-shadow:0 1px 1px rgba(0,0,0,0.12);"></div>
<div class="a" style="left:653px;top:964px;width:3px;height:2px;background:#ff0808;"></div>
<div class="a" style="left:658px;top:964px;width:3px;height:2px;background:#ff0808;"></div>
<div class="t" style="left:657.5px;top:966.67px;font-size:12.2px;line-height:12.2px;color:#6a6a6a;">Pracoviště</div>
<svg class="a" style="left:783px;top:970px;" width="9" height="6" viewBox="0 0 9 6"><path d="M0.5 0.5h8l-4 4.5z" fill="#222"/></svg>
<svg class="a" style="left:800px;top:958px;" width="30" height="28" viewBox="0 0 30 28"><path d="M7.4 14.2Q7.6 12 9.8 12L13.7 15.6L20.6 7.4Q22.4 6.4 23.2 7.9L15 19.6Q13.7 21 12.5 19.7Z" fill="#ee7a44"/></svg>
<div class="t" style="left:296px;top:1004.76px;font-size:12.45px;line-height:12.45px;color:#222;font-weight:bold;">15.12.2021</div>
<div class="t" style="left:295.6px;top:1024.10px;font-size:11.7px;line-height:11.7px;color:#666;font-weight:bold;">Středa</div>
<div class="t" style="left:850px;top:1004.84px;font-size:12px;line-height:12px;color:#111;font-weight:bold;width:52.5px;text-align:right;">0</div>
<div class="t" style="left:1363px;top:1004.84px;font-size:12px;line-height:12px;color:#111;font-weight:bold;width:52.5px;text-align:right;">0</div>
<div class="a" style="left:400px;top:1007px;width:75px;height:21px;background:#efefef;border:1px solid #9a9a9a;border-radius:3px;box-sizing:border-box;box-shadow:0 1px 1px rgba(0,0,0,0.12);"></div>
<div class="a" style="left:401px;top:1009px;width:3px;height:2px;background:#ff0808;"></div>
<div class="a" style="left:406px;top:1009px;width:3px;height:2px;background:#ff0808;"></div>
<div class="t" style="left:405px;top:1011.67px;font-size:12.2px;line-height:12.2px;color:#6a6a6a;">Směna</div>
<svg class="a" style="left:462px;top:1015px;" width="9" height="6" viewBox="0 0 9 6"><path d="M0.5 0.5h8l-4 4.5z" fill="#222"/></svg>
<div class="a" style="left:481px;top:1007px;width:80px;height:21px;background:#f7efa0;border:1px solid #9a9a9a;border-radius:3px;box-sizing:border-box;box-shadow:0 1px 1px rgba(0,0,0,0.12);"></div>
<div class="t" style="left:486px;top:1011.67px;font-size:12.2px;line-height:12.2px;color:#6a6a6a;">Start</div>
<div class="a" style="left:566px;top:1007px;width:81px;height:21px;background:#f7efa0;border:1px solid #9a9a9a;border-radius:3px;box-sizing:border-box;box-shadow:0 1px 1px rgba(0,0,0,0.12);"></div>
<div class="t" style="left:571.5px;top:1011.67px;font-size:12.2px;line-height:12.2px;color:#6a6a6a;">Konec</div>
<div class="a" style="left:652px;top:1007px;width:144px;height:21px;background:#f7efa0;border:1px solid #9a9a9a;border-radius:3px;box-sizing:border-box;box-shadow:0 1px 1px rgba(0,0,0,0.12);"></div>
<div class="a" style="left:653px;top:1009px;width:3px;height:2px;background:#ff0808;"></div>
<div class="a" style="left:658px;top:1009px;width:3px;height:2px;background:#ff0808;"></div>
<div class="t" style="left:657.5px;top:1011.67px;font-size:12.2px;line-height:12.2px;color:#6a6a6a;">Pracoviště</div>
<svg class="a" style="left:783px;top:1015px;" width="9" height="6" viewBox="0 0 9 6"><path d="M0.5 0.5h8l-4 4.5z" fill="#222"/></svg>
<svg class="a" style="left:800px;top:1003px;" width="30" height="28" viewBox="0 0 30 28"><path d="M7.4 14.2Q7.6 12 9.8 12L13.7 15.6L20.6 7.4Q22.4 6.4 23.2 7.9L15 19.6Q13.7 21 12.5 19.7Z" fill="#ee7a44"/></svg>
<div class="t" style="left:296px;top:1049.76px;font-size:12.45px;line-height:12.45px;color:#222;font-weight:bold;">16.12.2021</div>
<div class="t" style="left:295.6px;top:1069.10px;font-size:11.7px;line-height:11.7px;color:#666;font-weight:bold;">Čtvrtek</div>
<div class="t" style="left:850px;top:1049.84px;font-size:12px;line-height:12px;color:#111;font-weight:bold;width:52.5px;text-align:right;">0</div>
<div class="t" style="left:1363px;top:1049.84px;font-size:12px;line-height:12px;color:#111;font-weight:bold;width:52.5px;text-align:right;">0</div>
<div class="a" style="left:400px;top:1052px;width:75px;height:21px;background:#efefef;border:1px solid #9a9a9a;border-radius:3px;box-sizing:border-box;box-shadow:0 1px 1px rgba(0,0,0,0.12);"></div>
<div class="a" style="left:401px;top:1054px;width:3px;height:2px;background:#ff0808;"></div>
<div class="a" style="left:406px;top:1054px;width:3px;height:2px;background:#ff0808;"></div>
<div class="t" style="left:405px;top:1056.67px;font-size:12.2px;line-height:12.2px;color:#6a6a6a;">Směna</div>
<svg class="a" style="left:462px;top:1060px;" width="9" height="6" viewBox="0 0 9 6"><path d="M0.5 0.5h8l-4 4.5z" fill="#222"/></svg>
<div class="a" style="left:481px;top:1052px;width:80px;height:21px;background:#f7efa0;border:1px solid #9a9a9a;border-radius:3px;box-sizing:border-box;box-shadow:0 1px 1px rgba(0,0,0,0.12);"></div>
<div class="t" style="left:486px;top:1056.67px;font-size:12.2px;line-height:12.2px;color:#6a6a6a;">Start</div>
<div class="a" style="left:566px;top:1052px;width:81px;height:21px;background:#f7efa0;border:1px solid #9a9a9a;border-radius:3px;box-sizing:border-box;box-shadow:0 1px 1px rgba(0,0,0,0.12);"></div>
<div class="t" style="left:571.5px;top:1056.67px;font-size:12.2px;line-height:12.2px;color:#6a6a6a;">Konec</div>
<div class="a" style="left:652px;top:1052px;width:144px;height:21px;background:#f7efa0;border:1px solid #9a9a9a;border-radius:3px;box-sizing:border-box;box-shadow:0 1px 1px rgba(0,0,0,0.12);"></div>
<div class="a" style="left:653px;top:1054px;width:3px;height:2px;background:#ff0808;"></div>
<div class="a" style="left:658px;top:1054px;width:3px;height:2px;background:#ff0808;"></div>
<div class="t" style="left:657.5px;top:1056.67px;font-size:12.2px;line-height:12.2px;color:#6a6a6a;">Pracoviště</div>
<svg class="a" style="left:783px;top:1060px;" width="9" height="6" viewBox="0 0 9 6"><path d="M0.5 0.5h8l-4 4.5z" fill="#222"/></svg>
<svg class="a" style="left:800px;top:1048px;" width="30" height="28" viewBox="0 0 30 28"><path d="M7.4 14.2Q7.6 12 9.8 12L13.7 15.6L20.6 7.4Q22.4 6.4 23.2 7.9L15 19.6Q13.7 21 12.5 19.7Z" fill="#ee7a44"/></svg>
<div class="a" style="left:262px;top:1067px;width:1645px;height:13px;background:#f1f1f1;"></div>
<svg class="a" style="left:266px;top:1069px;" width="6" height="9" viewBox="0 0 6 9"><path d="M5 0.5v8L0.5 4.5z" fill="#a3a3a3"/></svg>
<svg class="a" style="left:1899px;top:1069px;" width="6" height="9" viewBox="0 0 6 9"><path d="M0.5 1v7L4.5 4.5z" fill="#a3a3a3"/></svg>
<div class="a" style="left:1907px;top:1067px;width:13px;height:13px;background:#dcdcdc;"></div>
<div class="a" style="left:1907px;top:187px;width:13px;height:880px;background:#f1f1f1;"></div>
<div class="a" style="left:1909px;top:200px;width:9px;height:341px;background:#c1c1c1;"></div>
<svg class="a" style="left:1910px;top:191px;" width="8" height="5" viewBox="0 0 8 5"><path d="M1 4.5h6L4 1z" fill="#a3a3a3"/></svg>
<svg class="a" style="left:1910px;top:1058px;" width="8" height="5" viewBox="0 0 8 5"><path d="M0.5 0.5h7L4 4.5z" fill="#505050"/></svg>
<div class="a" style="left:75px;top:187px;width:1845px;height:13px;background:linear-gradient(to bottom,rgba(50,50,110,0.30),rgba(60,60,60,0.10) 35%,rgba(60,60,60,0.03) 70%,rgba(60,60,60,0));"></div>
<svg class="a" style="left:900px;top:385px;" width="190" height="170" viewBox="0 0 190 170"><path d="M4.5 3.5L184 166" stroke="#000" stroke-width="2" fill="none"/></svg>
<div class="a" style="left:1083px;top:550px;width:412px;height:136px;background:rgba(255,192,0,0.8);border:2px solid #000;box-sizing:border-box;"></div>
<div class="t" style="left:1083px;top:581.30px;font-size:31.9px;line-height:31.9px;color:#000;width:412px;text-align:center;">Počet odpracovaných</div>
<div class="t" style="left:1083px;top:624.99px;font-size:32.5px;line-height:32.5px;color:#000;width:412px;text-align:center;">hodin</div>
</body></html>
